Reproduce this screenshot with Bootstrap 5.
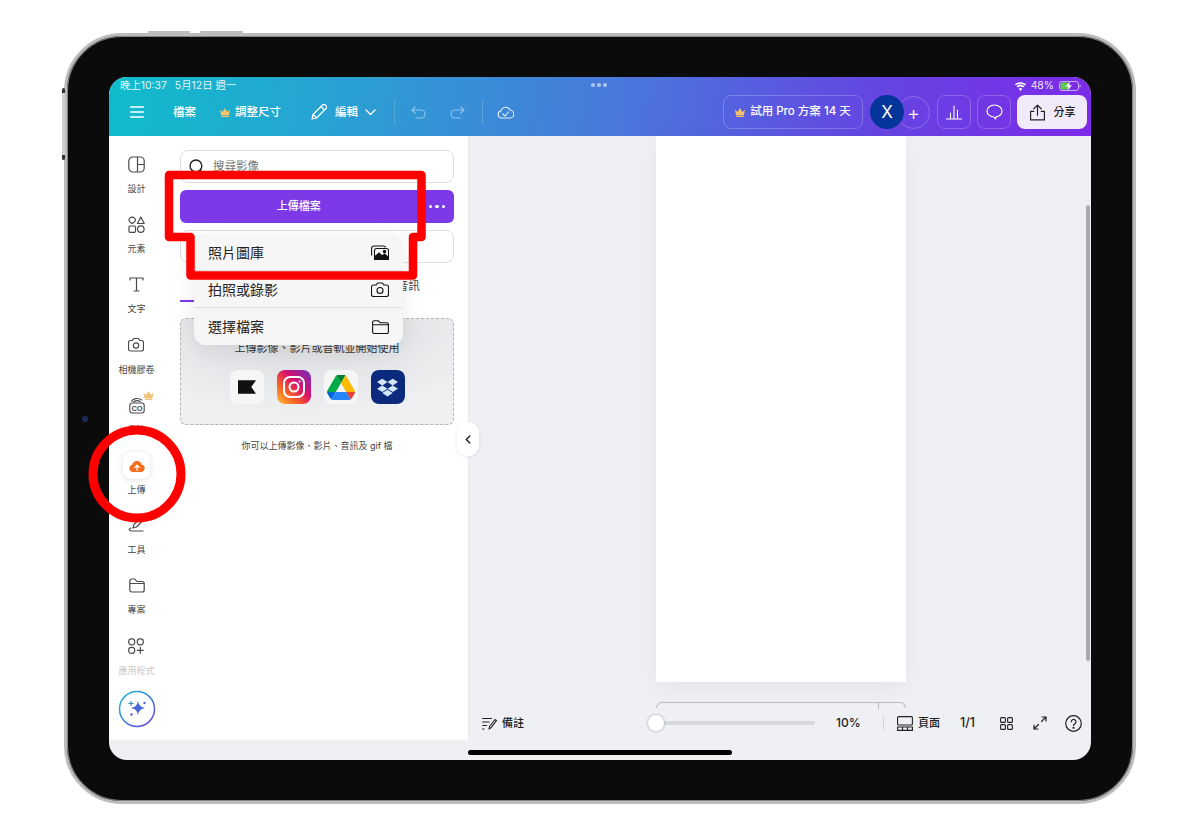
<!DOCTYPE html>
<html lang="zh-Hant">
<head>
  <meta charset="UTF-8">
  <meta name="viewport" content="width=device-width, initial-scale=1.0">
  <title>上傳檔案</title>
  <link href="https://cdn.jsdelivr.net/npm/bootstrap@5.3.3/dist/css/bootstrap.min.css" rel="stylesheet">
  <style>
    body {
      background: #fff;
      font-family: Inter, "Noto Sans CJK TC", sans-serif;
      color: #222;
    }

    svg { display: block; flex: none; }

    .stage { position: relative; width: 1200px; height: 836px; overflow: hidden; padding: 33px 64px 0; }

    /* tablette */
    .device {
      width: 1072px;
      height: 771px;
      padding: 41px 42px;
      background: #0b0b0b;
      border: 3px solid #bcbcbc;
      border-radius: 58px;
      box-shadow: inset 0 0 0 1px #858585;
    }
    .screen { height: 683px; border-radius: 18px; overflow: hidden; background: #eff0f4; }
    .hw-btn { position: absolute; background: #bdbdbd; border-radius: 2px; }
    .hw-top1 { left: 148px; top: 31px; width: 42px; height: 2px; }
    .hw-top2 { left: 200px; top: 31px; width: 43px; height: 2px; }
    .hw-side {
      left: 62px; top: 88px; width: 3px; height: 72px;
      background: linear-gradient(#333 0 5px, #d0d0d0 5px 67px, #333 67px);
    }
    .hw-cam { position: absolute; left: 82px; top: 416px; width: 6px; height: 6px; border-radius: 50%; background: #1a2a5c; }

    /* barre du haut */
    .topbar {
      height: 59px;
      flex: none;
      color: #fff;
      background: linear-gradient(98deg, #0fbccb 0%, #27a3d2 22%, #4a78dc 52%, #6445e2 78%, #7d2ae8 100%);
    }
    .status-row { height: 17px; padding: 1px 10px 0 11px; font-size: 10.4px; line-height: 14px; color: rgba(255,255,255,.9); }
    .status-date { margin-left: 8px; }
    .status-dots { position: absolute; left: 591px; top: 83px; display: flex; gap: 2.5px; }
    .status-dots i { width: 3.5px; height: 3.5px; border-radius: 50%; background: rgba(255,255,255,.55); }
    .tool-row { height: 36px; font-size: 11.5px; font-weight: 500; padding-right: 4px; }
    .tool-row > span { padding-top: 1px; }
    .tb-divider { width: 1px; height: 26px; background: rgba(255,255,255,.18); }
    .tb-outline {
      height: 34px;
      border: 1px solid rgba(255,255,255,.22);
      border-radius: 8px;
      background: transparent;
      color: #fff;
      font-size: 11.5px;
      font-weight: 500;
      padding: 0;
      white-space: nowrap;
    }
    .tb-trial { width: 140px; margin-left: auto; gap: 5px; }
    .tb-square { width: 34px; margin-left: 6px; }
    .tb-avatar {
      width: 34px; height: 34px; margin-left: 7px;
      border-radius: 50%;
      background: #04359a;
      font-size: 17px; font-weight: 400;
      position: relative; z-index: 1;
    }
    .tb-plus {
      width: 33px; height: 33px; margin-left: -7px;
      border: 1px solid rgba(255,255,255,.22);
      border-radius: 50%;
      font-size: 20px; font-weight: 300;
    }
    .tb-share {
      width: 70px; height: 34px; margin-left: 6px; padding: 0;
      background: #f1eafb;
      border: 0;
      border-radius: 8px;
      color: #222;
      font-size: 11px;
      font-weight: 500;
      gap: 8px;
      white-space: nowrap;
    }
    .ml-21 { margin-left: 21px; } .ml-29 { margin-left: 29px; } .ml-24 { margin-left: 24px; }
    .ml-5 { margin-left: 5px; } .ml-30 { margin-left: 30px; } .ml-8 { margin-left: 8px; }
    .ml-7 { margin-left: 7px; } .ml-18 { margin-left: 18px; } .ml-16 { margin-left: 16px; }
    .ml-17 { margin-left: 17px; } .ml-14 { margin-left: 14px; } .ml-13 { margin-left: 13px; }
    .ml-20 { margin-left: 20px; } .ml-22 { margin-left: 22px; }

    /* colonne gauche */
    .left-col { width: 360px; flex: none; height: 604px; background: #fff; border-right: 1px solid #e9eaee; }
    .rail { width: 55px; flex: none; padding-top: 11px; }
    .rail-item { height: 60.2px; padding-top: 6px; color: #4a4a4f; }
    .rail-icon { width: 27px; height: 22px; }
    .rail-label { margin-top: 7px; font-size: 9px; line-height: 14px; white-space: nowrap; color: #444; }
    .rail-faded { color: #c9c9c9; }
    .rail-upload { width: 27px; height: 27px; margin: -2px 0; border-radius: 8px; background: #fff; box-shadow: 0 1px 6px rgba(0,0,0,.12); }
    .rail-fade { margin-top: 6px; }
    .rail-crown { position: absolute; left: 143px; top: 391px; }

    .side-panel { width: 304px; padding: 14px 14px 0 16px; }
    .search-box {
      height: 33px;
      border: 1px solid #dcdde2;
      border-radius: 8px;
      padding-left: 8px;
      gap: 8px;
      font-size: 11.5px;
      color: #777;
    }
    .upload-group { height: 33px; margin-top: 7px; }
    .btn-upload {
      background: #7d39e8;
      color: #fff;
      border: 0;
      border-radius: 6px;
      font-size: 11px;
      font-weight: 500;
      padding: 0;
    }
    .btn-upload:first-child { width: 237px; }
    .btn-upload-more { width: 37px; border-radius: 0 6px 6px 0; }
    .more-dots { gap: 3px; padding-left: 12px; }
    .more-dots i { width: 3.5px; height: 3.5px; border-radius: 50%; background: #fff; }
    .btn-record {
      height: 33px; width: 100%; margin-top: 7px;
      background: #fff;
      border: 1px solid #dcdde2;
      border-radius: 8px;
      font-size: 11.5px;
      padding: 0;
    }
    .tab-row { height: 39px; }
    .tab-item { width: 91.3px; text-align: center; font-size: 11.5px; line-height: 46px; color: #444; position: relative; }
    .tab-active::after { content: ""; position: absolute; left: 0; right: 0; bottom: 0; height: 2px; background: #7d39e8; }
    .drop-zone {
      height: 107px; margin-top: 16px;
      border: 1.5px dashed #b3b5bb;
      border-radius: 6px;
      background: radial-gradient(ellipse 75% 95% at 45% 0, #d8d9dc, #eef0f2);
      font-size: 11px;
      padding-top: 19px;
    }
    .drop-title { line-height: 20px; color: #333; }
    .drop-logos { gap: 13px; margin-top: 12px; }
    .logo-tile { width: 34px; height: 34px; border-radius: 8px; background: #f6f6f7; overflow: hidden; }
    .logo-insta { background: linear-gradient(45deg, #fdb32c 5%, #f6562c 35%, #d3106f 60%, #7a2bb5 95%); }
    .logo-dropbox { background: #0c2a7d; }
    .drop-note { font-size: 9px; margin-top: 14px; line-height: 14px; color: #444; text-align: center; }

    .collapse-tab {
      position: absolute; left: 457px; top: 422px;
      width: 22px; height: 34px;
      background: #fff;
      border-radius: 11px;
      box-shadow: 0 1px 4px rgba(0,0,0,.08);
    }

    /* canevas */
    .canvas-col { min-width: 0; height: 624px; }
    .paper { width: 250px; height: 546px; margin-left: 187px; background: #fff; flex: none; box-shadow: 0 6px 20px rgba(60,60,90,.06); }
    .page-bracket {
      width: 250px; height: 6px; margin: 20px 0 3px 187px;
      border: 1px solid #b9bac0; border-bottom: 0;
      border-radius: 8px 8px 0 0;
      position: relative; flex: none;
    }
    .page-bracket::after { content: ""; position: absolute; left: 221px; top: 0; width: 1px; height: 6px; background: #b9bac0; }
    .bottom-bar { height: 24px; flex: none; font-size: 11px; font-weight: 500; color: #222; white-space: nowrap; }
    .zoom-slider { width: 167px; height: 16px; margin-left: 124px; position: relative; }
    .zoom-track { position: absolute; left: 8px; right: 0; top: 6px; height: 4px; background: #d8d9df; border-radius: 2px; }
    .zoom-knob { position: absolute; left: 0; top: 0; width: 16px; height: 16px; border-radius: 50%; background: #fff; box-shadow: 0 0 3px rgba(0,0,0,.35); }
    .zoom-value { width: 25px; font-size: 12px; }
    .page-count { width: 19px; font-size: 12.5px; }
    .bar-sep { width: 1px; height: 14px; background: #d5d6db; }
    .scroll-thumb { position: absolute; left: 1086px; top: 205px; width: 4px; height: 456px; border-radius: 2px; background: #a9aaae; }
    .home-bar { position: absolute; left: 468px; top: 750px; width: 264px; height: 5px; border-radius: 3px; background: #000; }

    /* menu flottant */
    .ios-menu {
      position: absolute; left: 194px; top: 234px;
      width: 209px;
      border-radius: 12px;
      overflow: hidden;
      background: #f6f6f6;
      box-shadow: 0 6px 24px rgba(0,0,0,.08);
    }
    .ios-menu .list-group-item {
      height: 37px;
      padding: 0 14px;
      background: #f6f6f6;
      border-color: #dedede;
      font-size: 14px;
      color: #222;
    }

    .mark-overlay { position: absolute; left: 0; top: 0; pointer-events: none; }
    .ai-btn { position: absolute; left: 118px; top: 690px; }
  </style>
</head>
<body>
  <div class="stage">
    <div class="device">
      <div class="screen d-flex flex-column">

        <div class="topbar">
          <div class="status-row d-flex align-items-center">
            <span>晚上10:37</span><span class="status-date">5月12日 週一</span>
            <svg class="ms-auto" width="11" height="9" viewBox="0 0 11 9" fill="#fff"><path d="M5.5 9 3.7 6.7a2.8 2.8 0 0 1 3.6 0zM2.8 5.6 1.6 4.2a6 6 0 0 1 7.8 0L8.2 5.6a4.2 4.2 0 0 0-5.4 0zM.9 3.4 0 2.2a8.4 8.4 0 0 1 11 0l-.9 1.2a7 7 0 0 0-9.2 0z"/></svg>
            <span class="ml-5">48%</span>
            <svg class="ml-5" width="22" height="10" viewBox="0 0 22 10"><rect x=".5" y=".5" width="19" height="9" rx="2.5" fill="none" stroke="rgba(255,255,255,.6)"/><rect x="1.5" y="1.5" width="9" height="7" rx="1.5" fill="#5ccb4e"/><path d="M20.5 3.5v3c.8 0 1.2-.7 1.2-1.5s-.4-1.5-1.2-1.5z" fill="rgba(255,255,255,.6)"/><path d="M11 .5 6.5 5.8h3L8.5 9.5 13 4.2h-3z" fill="#fff"/></svg>
          </div>
          <div class="tool-row d-flex align-items-center">
            <svg class="ml-21" width="14" height="12" viewBox="0 0 14 12" stroke="#fff" stroke-width="1.4" stroke-linecap="round"><path d="M.7 1h12.6M.7 6h12.6M.7 11h12.6"/></svg>
            <span class="ml-29">檔案</span>
            <svg class="ml-24" width="10" height="9" viewBox="0 0 10 9" fill="#f3c26b"><path d="M0 1.5 2.6 4 5 0l2.4 4L10 1.5 9 7H1zM1.2 7.6h7.6V9H1.2z"/></svg>
            <span class="ml-5">調整尺寸</span>
            <svg class="ml-30" width="16" height="16" viewBox="0 0 16 16" fill="none" stroke="#fff" stroke-width="1.2" stroke-linejoin="round"><path d="M1 15l1-4.5L11.5 1a1.9 1.9 0 0 1 2.8 0l.7.7a1.9 1.9 0 0 1 0 2.8L5.5 14z"/><path d="M2 10.5 5.5 14M10 2.5l3.5 3.5"/></svg>
            <span class="ml-8">編輯</span>
            <svg class="ml-7" width="11" height="7" viewBox="0 0 11 7" fill="none" stroke="#fff" stroke-width="1.3" stroke-linecap="round" stroke-linejoin="round"><path d="M1 1l4.5 4.5L10 1"/></svg>
            <span class="tb-divider ml-18"></span>
            <svg class="ml-16" width="15" height="13" viewBox="0 0 15 13" fill="none" stroke="rgba(255,255,255,.45)" stroke-width="1.2" stroke-linecap="round" stroke-linejoin="round"><path d="M4 1 1 4l3 3M1 4h9a4 4 0 0 1 0 8H5"/></svg>
            <svg class="ml-24" width="15" height="13" viewBox="0 0 15 13" fill="none" stroke="rgba(255,255,255,.45)" stroke-width="1.2" stroke-linecap="round" stroke-linejoin="round"><path d="M11 1l3 3-3 3M14 4H5a4 4 0 0 0 0 8h5"/></svg>
            <span class="tb-divider ml-17"></span>
            <svg class="ml-14" width="17" height="14" viewBox="0 0 17 14" fill="none" stroke="rgba(255,255,255,.85)" stroke-width="1.1" stroke-linecap="round" stroke-linejoin="round"><path d="M4.5 13A3.6 3.6 0 0 1 4 5.900 4.800 4.800 0 0 1 13 5a4 4 0 0 1-.5 8z"/><path d="M5.800 8.800 8 11l3.500-4"/></svg>

            <button class="btn tb-outline tb-trial d-flex align-items-center justify-content-center">
              <svg width="10" height="9" viewBox="0 0 10 9" fill="#f3c26b"><path d="M0 1.5 2.6 4 5 0l2.4 4L10 1.5 9 7H1zM1.2 7.6h7.6V9H1.2z"/></svg>
              試用 Pro 方案 14 天
            </button>
            <span class="tb-avatar d-flex align-items-center justify-content-center">X</span>
            <span class="tb-plus d-flex align-items-center justify-content-center">+</span>
            <button class="btn tb-outline tb-square d-flex align-items-center justify-content-center ml-7">
              <svg width="16" height="15" viewBox="0 0 16 15" fill="none" stroke="#fff" stroke-width="1.1" stroke-linecap="round"><path d="M.5 14h15M4.500 14V8M8 14V1M11.500 14V5"/></svg>
            </button>
            <button class="btn tb-outline tb-square d-flex align-items-center justify-content-center">
              <svg width="17" height="16" viewBox="0 0 17 16" fill="none" stroke="#fff" stroke-width="1.2" stroke-linejoin="round"><path d="M8.500 1C4.400 1 1 3.600 1 7c0 3.300 3.100 5.800 7 6l1.500 2 .6-2.200c3.400-.6 5.900-3 5.900-5.800 0-3.400-3.400-6-7.500-6z"/></svg>
            </button>
            <button class="btn tb-share d-flex align-items-center justify-content-center">
              <svg width="17" height="17" viewBox="0 0 16 16" fill="none" stroke="#222" stroke-width="1.1" stroke-linecap="round" stroke-linejoin="round"><path d="M8 10.500V1M4.500 4.500 8 1l3.500 3.500M4.500 7H1.500v8h13V7h-3"/></svg>
              <span>分享</span>
            </button>
          </div>
        </div>

        <div class="d-flex flex-grow-1">
          <div class="left-col d-flex">
            <div class="rail d-flex flex-column align-items-center">
              <div class="rail-item d-flex flex-column align-items-center">
                <div class="rail-icon d-flex align-items-center justify-content-center">
                  <svg width="17" height="17" viewBox="0 0 17 17" fill="none" stroke="currentColor" stroke-width="1.2"><rect x=".8" y="1" width="15.400" height="15" rx="4"/><path d="M9.500 1v15M9.500 8.500h6.700"/></svg>
                </div>
                <span class="rail-label">設計</span>
              </div>
              <div class="rail-item d-flex flex-column align-items-center">
                <div class="rail-icon d-flex align-items-center justify-content-center">
                  <svg width="17" height="17" viewBox="0 0 17 17" fill="none" stroke="currentColor" stroke-width="1.2" stroke-linejoin="round"><path d="M4.200 1.200c-1.900 0-3.300 1.500-3.300 2.900 0 1.500 1.700 2.400 3.300 3.500 1.600-1.100 3.300-2 3.300-3.500 0-1.400-1.400-2.900-3.300-2.900z"/><path d="M12.800 1 16.200 7.500H9.400z"/><rect x="1" y="10" width="6.500" height="6.300" rx="1"/><circle cx="12.800" cy="13.100" r="3.300"/></svg>
                </div>
                <span class="rail-label">元素</span>
              </div>
              <div class="rail-item d-flex flex-column align-items-center">
                <div class="rail-icon d-flex align-items-center justify-content-center">
                  <svg width="15" height="15" viewBox="0 0 15 15" fill="none" stroke="currentColor" stroke-width="1.200" stroke-linecap="round"><path d="M1 3V1h13v2M7.500 1v13M5 14h5"/></svg>
                </div>
                <span class="rail-label">文字</span>
              </div>
              <div class="rail-item d-flex flex-column align-items-center">
                <div class="rail-icon d-flex align-items-center justify-content-center">
                  <svg width="16" height="15" viewBox="0 0 16 15" fill="none" stroke="currentColor" stroke-width="1.200" stroke-linejoin="round"><path d="M5.500 1.500h5l1.200 2h1.800a2 2 0 0 1 2 2v6.500a2 2 0 0 1-2 2h-11a2 2 0 0 1-2-2V5.500a2 2 0 0 1 2-2h1.800z"/><circle cx="8" cy="8.500" r="2.700"/></svg>
                </div>
                <span class="rail-label">相機膠卷</span>
              </div>
              <div class="rail-item d-flex flex-column align-items-center">
                <div class="rail-icon d-flex align-items-center justify-content-center">
                  <svg width="16" height="18" viewBox="0 0 16 18" fill="none" stroke="currentColor" stroke-width="1.100" stroke-linecap="round"><rect x=".8" y="7" width="14.400" height="10" rx="2.500"/><path d="M2.500 5.200C4 2.500 9 1.500 12.500 4M4.500 6C6 4.500 9 4 11 5.500"/><text x="8" y="15" font-size="7.500" font-weight="700" text-anchor="middle" fill="currentColor" stroke="none" font-family="Liberation Sans, sans-serif">CO</text></svg>
                </div>
                <span class="rail-label">品牌</span>
              </div>
              <div class="rail-item d-flex flex-column align-items-center">
                <div class="rail-upload d-flex align-items-center justify-content-center">
                  <svg width="16" height="13" viewBox="0 0 16 13"><path d="M4 13a3.700 3.700 0 0 1-.8-7.300 4.900 4.900 0 0 1 9.500-.2A3.800 3.800 0 0 1 12 13z" fill="#f4701e"/><path d="M8 11V6.500M5.900 8.400 8 6.300l2.100 2.100" fill="none" stroke="#fff" stroke-width="1.300" stroke-linecap="round" stroke-linejoin="round"/></svg>
                </div>
                <span class="rail-label rail-fade">上傳</span>
              </div>
              <div class="rail-item d-flex flex-column align-items-center">
                <div class="rail-icon d-flex align-items-center justify-content-center">
                  <svg width="17" height="16" viewBox="0 0 17 16" fill="none" stroke="currentColor" stroke-width="1.200" stroke-linecap="round" stroke-linejoin="round"><path d="M5 11 6 7.500 12 1.500l2.500 2.500-6 6z"/><path d="M3 11c-3 1-2 3 1 3h11"/></svg>
                </div>
                <span class="rail-label">工具</span>
              </div>
              <div class="rail-item d-flex flex-column align-items-center">
                <div class="rail-icon d-flex align-items-center justify-content-center">
                  <svg width="16" height="15" viewBox="0 0 16 15" fill="none" stroke="currentColor" stroke-width="1.200" stroke-linejoin="round"><path d="M.8 4V3a2 2 0 0 1 2-2h3l2 2.500h5.400a2 2 0 0 1 2 2V12a2 2 0 0 1-2 2H2.800a2 2 0 0 1-2-2z"/><path d="M.8 5.500h14.400"/></svg>
                </div>
                <span class="rail-label">專案</span>
              </div>
              <div class="rail-item d-flex flex-column align-items-center">
                <div class="rail-icon d-flex align-items-center justify-content-center">
                  <svg width="16" height="16" viewBox="0 0 16 16" fill="none" stroke="currentColor" stroke-width="1.200" stroke-linecap="round"><rect x=".7" y=".8" width="6" height="6" rx="2.500"/><rect x="9.300" y=".8" width="6" height="6" rx="2.500"/><rect x=".7" y="9.300" width="6" height="6" rx="2.500"/><path d="M12.300 9.300v6M9.300 12.300h6"/></svg>
                </div>
                <span class="rail-label rail-faded">應用程式</span>
              </div>
            </div>

            <div class="side-panel">
              <div class="search-box d-flex align-items-center">
                <svg width="16" height="16" viewBox="0 0 15 15" fill="none" stroke="#222" stroke-width="1.300" stroke-linecap="round"><circle cx="6.500" cy="6.500" r="5.500"/><path d="M10.500 10.500 14 14"/></svg>
                <span>搜尋影像</span>
              </div>
              <div class="btn-group upload-group d-flex">
                <button class="btn btn-upload">上傳檔案</button>
                <button class="btn btn-upload btn-upload-more d-flex align-items-center more-dots"><i></i><i></i><i></i></button>
              </div>
              <button class="btn btn-record"></button>
              <div class="tab-row d-flex">
                <div class="tab-item tab-active"></div>
                <div class="tab-item"></div>
                <div class="tab-item">音訊</div>
              </div>
              <div class="drop-zone text-center">
                <div class="drop-title">上傳影像、影片或音軌並開始使用</div>
                <div class="drop-logos d-flex justify-content-center">
                  <div class="logo-tile d-flex align-items-center justify-content-center">
                    <svg width="18" height="14" viewBox="0 0 19 14" fill="#111"><path d="M0 0h19l-5 7 5 7H0z"/></svg>
                  </div>
                  <div class="logo-tile logo-insta d-flex align-items-center justify-content-center">
                    <svg width="24" height="24" viewBox="0 0 24 24" fill="none" stroke="#fff" stroke-width="2"><rect x="2" y="2" width="20" height="20" rx="6"/><circle cx="12" cy="12" r="4.500"/><circle cx="17.600" cy="6.400" r="1" fill="#fff" stroke="none"/></svg>
                  </div>
                  <div class="logo-tile d-flex align-items-center justify-content-center">
                    <svg width="28" height="25" viewBox="0 0 87.300 78"><path d="m6.600 66.850 3.850 6.650c.8 1.400 1.950 2.500 3.300 3.300l13.750-23.800h-27.500c0 1.550.4 3.100 1.200 4.500z" fill="#0066da"/><path d="m43.650 25-13.750-23.800c-1.350.8-2.500 1.900-3.300 3.300l-25.400 44a9.060 9.060 0 0 0 -1.200 4.500h27.500z" fill="#00ac47"/><path d="m73.550 76.800c1.350-.8 2.500-1.900 3.300-3.300l1.600-2.750 7.650-13.250c.8-1.400 1.200-2.950 1.200-4.500h-27.502l5.852 11.500z" fill="#ea4335"/><path d="m43.650 25 13.750-23.800c-1.350-.8-2.900-1.200-4.500-1.200h-18.500c-1.600 0-3.150.45-4.500 1.200z" fill="#00832d"/><path d="m59.800 53h-32.300l-13.750 23.800c1.350.8 2.900 1.200 4.500 1.200h50.800c1.600 0 3.150-.45 4.500-1.200z" fill="#2684fc"/><path d="m73.400 26.500-12.700-22c-.8-1.400-1.950-2.500-3.300-3.300l-13.750 23.800 16.150 28h27.450c0-1.550-.4-3.100-1.200-4.500z" fill="#ffba00"/></svg>
                  </div>
                  <div class="logo-tile logo-dropbox d-flex align-items-center justify-content-center">
                    <svg width="21" height="21" viewBox="0 0 24 24" fill="#d3e6f8"><path d="M6 2l6 3.800-6 3.800-6-3.800zM18 2l6 3.800-6 3.800-6-3.800zM6 9.600l6 3.800-6 3.800-6-3.800zM18 9.600l6 3.800-6 3.800-6-3.800zM12 14.600l6 3.800-6 3.800-6-3.800z"/></svg>
                  </div>
                </div>
              </div>
              <div class="drop-note">你可以上傳影像、影片、音訊及 gif 檔</div>
            </div>
          </div>

          <div class="canvas-col d-flex flex-column flex-grow-1">
            <div class="paper"></div>
            <div class="page-bracket"></div>
            <div class="bottom-bar d-flex align-items-center">
              <svg class="ml-13" width="15" height="13" viewBox="0 0 15 13" fill="none" stroke="#222" stroke-width="1.100" stroke-linecap="round" stroke-linejoin="round"><path d="M.6 1.500h9M.6 5h6.500M.6 8.500h4M.6 12h1.500M7 12l.5-2.500L13 2.500l1.500 1.200-5.500 7z"/></svg>
              <span class="ml-5">備註</span>
              <div class="zoom-slider"><div class="zoom-track"></div><div class="zoom-knob"></div></div>
              <span class="zoom-value ml-21">10%</span>
              <span class="bar-sep ml-22"></span>
              <svg class="ml-13" width="16" height="15" viewBox="0 0 16 15" fill="none" stroke="#222" stroke-width="1.100"><rect x=".6" y=".6" width="14.800" height="8.400" rx="1"/><path d="M.6 11h14.800v3.400H.6zM5.500 11v3.400M10.500 11v3.400"/></svg>
              <span class="ml-5">頁面</span>
              <span class="page-count ml-20">1/1</span>
              <svg class="ml-21" width="13" height="13" viewBox="0 0 13 13" fill="none" stroke="#222" stroke-width="1.100"><rect x=".6" y=".6" width="4.800" height="4.800" rx="1"/><rect x="7.600" y=".6" width="4.800" height="4.800" rx="1"/><rect x=".6" y="7.600" width="4.800" height="4.800" rx="1"/><rect x="7.600" y="7.600" width="4.800" height="4.800" rx="1"/></svg>
              <svg class="ml-20" width="14" height="14" viewBox="0 0 14 14" fill="none" stroke="#222" stroke-width="1.200" stroke-linecap="round" stroke-linejoin="round"><path d="M8.500 5.500 13 1M9 1h4v4M5.500 8.500 1 13M1 9v4h4"/></svg>
              <svg class="ml-18" width="17" height="17" viewBox="0 0 17 17" fill="none" stroke="#222" stroke-width="1.200" stroke-linecap="round"><circle cx="8.500" cy="8.500" r="7.800"/><path d="M6.300 6.700a2.300 2.300 0 1 1 3.500 2c-.8.500-1.300 1-1.300 1.800"/><circle cx="8.500" cy="12.800" r=".5" fill="#222"/></svg>
            </div>
          </div>
        </div>

      </div>
    </div>

    <span class="hw-btn hw-top1"></span>
    <span class="hw-btn hw-top2"></span>
    <span class="hw-btn hw-side"></span>
    <span class="hw-cam"></span>
    <div class="status-dots"><i></i><i></i><i></i></div>

    <svg class="rail-crown" width="11" height="9" viewBox="0 0 10 9" fill="#f0c27a"><path d="M0 1.500 2.600 4 5 0l2.400 4L10 1.500 9 7H1zM1.200 7.600h7.600V9H1.200z"/></svg>

    <div class="collapse-tab d-flex align-items-center justify-content-center">
      <svg width="6" height="9" viewBox="0 0 6 9" fill="none" stroke="#222" stroke-width="1.500" stroke-linecap="round" stroke-linejoin="round"><path d="M4.800 1 1.300 4.500l3.500 3.500"/></svg>
    </div>

    <div class="scroll-thumb"></div>
    <div class="home-bar"></div>

    <div class="ai-btn">
      <svg width="38" height="38" viewBox="0 0 38 38" fill="none">
        <defs><linearGradient id="aiRing" x1="0" y1="0" x2="1" y2="1"><stop offset="0" stop-color="#1cc0cc"/><stop offset=".55" stop-color="#3f7fd8"/><stop offset="1" stop-color="#7d35e0"/></linearGradient></defs>
        <circle cx="19" cy="19" r="17.500" fill="#fff" stroke="url(#aiRing)" stroke-width="1.500"/>
        <path d="M20 10.500c.8 4.700 2.300 6.400 7 7.500-4.700 1.100-6.200 2.800-7 7.500-.8-4.700-2.300-6.400-7-7.500 4.700-1.100 6.200-2.800 7-7.500z" fill="#4767d8"/>
        <path d="M13 11v5M10.500 13.500h5" stroke="#2d8ac8" stroke-width="1.100"/>
        <circle cx="26.500" cy="13" r="1.200" fill="#4767d8"/>
        <circle cx="13.500" cy="24.500" r="1.200" fill="#5a55d8"/>
      </svg>
    </div>

    <div class="ios-menu">
      <ul class="list-group list-group-flush">
        <li class="list-group-item d-flex align-items-center justify-content-between">
          照片圖庫
          <svg width="18" height="15" viewBox="0 0 18 15" fill="none" stroke="#111" stroke-width="1.100"><path d="M.6 10.500V3A2 2 0 0 1 2.600 1h10a2 2 0 0 1 1.900 1.500"/><rect x="3.500" y="3.500" width="14" height="11" rx="2"/><path d="M3.500 12 8 8l3 3 2.500-2 4 3.500v2H3.500z" fill="#111"/><circle cx="13.500" cy="6.500" r="1.200" fill="#111"/></svg>
        </li>
        <li class="list-group-item d-flex align-items-center justify-content-between">
          拍照或錄影
          <svg width="18" height="15" viewBox="0 0 18 15" fill="none" stroke="#111" stroke-width="1.100" stroke-linejoin="round"><path d="M6.500 1h5l1.300 2h2.700a2 2 0 0 1 2 2v7.500a2 2 0 0 1-2 2h-13a2 2 0 0 1-2-2V5a2 2 0 0 1 2-2h2.700z"/><circle cx="9" cy="8.500" r="3"/></svg>
        </li>
        <li class="list-group-item d-flex align-items-center justify-content-between">
          選擇檔案
          <svg width="17" height="14" viewBox="0 0 17 14" fill="none" stroke="#111" stroke-width="1.100" stroke-linejoin="round"><path d="M.6 12V2.500a1.800 1.800 0 0 1 1.800-1.800h3.800l1.800 2h6.600a1.800 1.800 0 0 1 1.800 1.800V12a1.500 1.500 0 0 1-1.500 1.500H2a1.500 1.500 0 0 1-1.400-1.500z"/><path d="M.6 4.800h15.800"/></svg>
        </li>
      </ul>
    </div>

    <svg class="mark-overlay" width="1200" height="836" viewBox="0 0 1200 836" fill="none" stroke="#ff0000">
      <path d="M169 175H421.500V237H413V275.500H190.500V237H169z" stroke-width="8.500" stroke-linejoin="round"/>
      <circle cx="137" cy="474" r="44" stroke-width="9"/>
    </svg>
  </div>

  <script src="https://cdn.jsdelivr.net/npm/bootstrap@5.3.3/dist/js/bootstrap.bundle.min.js"></script>
</body>
</html>
